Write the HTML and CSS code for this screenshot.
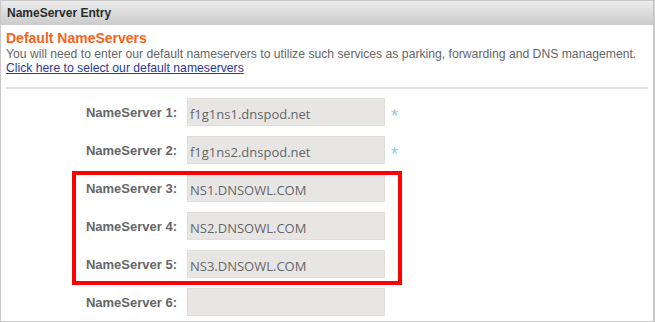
FILE: index.html
```html
<!DOCTYPE html>
<html>
<head>
<meta charset="utf-8">
<title>NameServer Entry</title>
<link rel="stylesheet" href="styles.css">
</head>
<body>
<div class="panel">
	<div class="panel-head">NameServer Entry</div>
	<div class="panel-body">
		<h3 class="title">Default NameServers</h3>
		<p class="desc">You will need to enter our default nameservers to utilize such services as parking, forwarding and DNS management.</p>
		<a class="link" href="#">Click here to select our default nameservers</a>
		<div class="sep"></div>
		<div class="form">
			<div class="row"><label>NameServer 1:</label><input type="text" value="f1g1ns1.dnspod.net"><span class="req">*</span></div>
			<div class="row"><label>NameServer 2:</label><input type="text" value="f1g1ns2.dnspod.net"><span class="req">*</span></div>
			<div class="row"><label>NameServer 3:</label><input type="text" value="NS1.DNSOWL.COM"></div>
			<div class="row"><label>NameServer 4:</label><input type="text" value="NS2.DNSOWL.COM"></div>
			<div class="row"><label>NameServer 5:</label><input type="text" value="NS3.DNSOWL.COM"></div>
			<div class="row"><label>NameServer 6:</label><input type="text" value=""></div>
			<div class="mark"></div>
		</div>
	</div>
</div>
</body>
</html>
```

FILE: styles.css
```css
html, body {margin:0px;padding:0px;background:#fff;font-family:"Liberation Sans", Arial, sans-serif;}
.panel {height:322px;box-sizing:border-box;border:1px solid #c8c8c8;border-right-width:2px;overflow:hidden;}
.panel-head {height:24px;line-height:24px;padding:0 6px;font-size:12px;font-weight:bold;color:#2b2b2b;background:linear-gradient(#ececec, #cbcbcb);}
.panel-body {padding:5px 5px 0 5px;}
.title {margin:0;font-size:14px;line-height:17px;color:#f26522;}
.desc {margin:0;font-size:12.2px;line-height:14px;color:#666;}
.link {display:block;font-size:12.2px;line-height:15px;color:#2a3a96;}
.sep {height:0;border-top:2px solid #e2e2e2;margin:11px 0 0 0;width:642px;}
.form {position:relative;padding-top:9px;}
.row {display:flex;align-items:flex-start;margin-bottom:10px;}
.row label {width:171px;text-align:right;font-size:13px;font-weight:bold;color:#666;padding-top:7px;}
.row input {margin:0 0 0 10px;width:198px;height:28px;box-sizing:border-box;border:1px solid #e0dedb;background:#e8e6e4;padding:3px 0 0 2px;font-family:"Open Sans", sans-serif;font-size:13px;color:#666;outline:none;}
.req {height:28px;box-sizing:border-box;padding-top:9px;color:#8ec8ec;font-size:18px;line-height:18px;margin-left:6px;}
.mark {position:absolute;left:66px;top:82px;width:322px;height:106px;border:4px solid #f00;}
```
